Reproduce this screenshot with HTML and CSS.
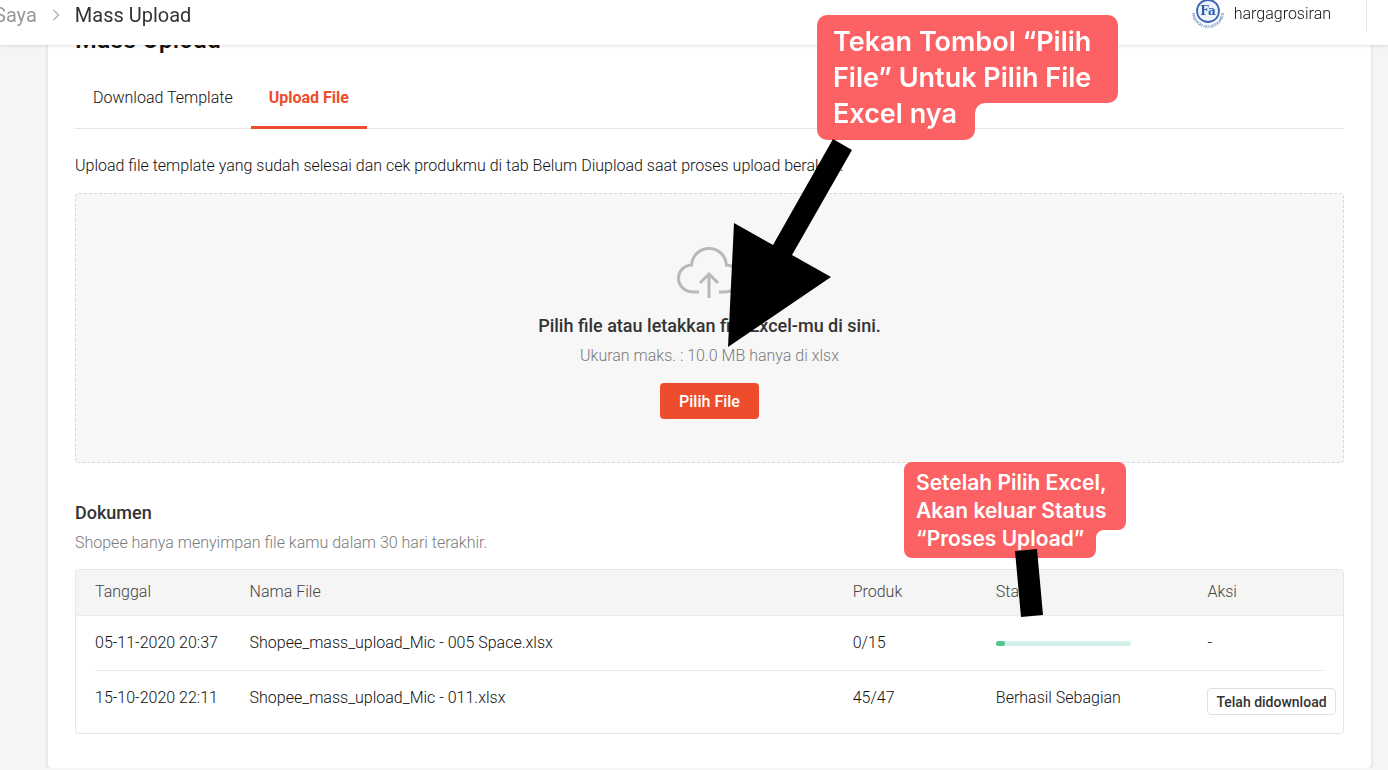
FILE: index.html
```html
<!DOCTYPE html>
<html lang="id">
<head>
    <meta charset="UTF-8">
    <meta name="viewport" content="width=device-width, initial-scale=1.0">
    <title>Mass Upload</title>
    <link rel="stylesheet" href="styles.css">
</head>
<body>
    <header class="topbar">
        <nav class="breadcrumb">
            <a href="#">Saya</a>
            <svg class="chevron" viewBox="0 0 8 12" width="8" height="12"><path d="M1.5 1l5 5-5 5" fill="none" stroke="#b2b2b2" stroke-width="1.4"/></svg>
            <span>Mass Upload</span>
        </nav>
        <div class="account">
            <svg class="avatar" viewBox="0 0 36 36" width="36" height="36">
                <defs><path id="ring" d="M2 18a16 16 0 0 0 32 0"/></defs>
                <circle cx="18" cy="17" r="11" fill="#edf3fb" stroke="#3f68b0" stroke-width="1.8"/>
                <text x="18" y="21" class="avatar-name">Fa</text>
                <text class="avatar-ring"><textPath href="#ring" startOffset="50%">FASHION ACCESSORIES</textPath></text>
            </svg>
            <span>hargagrosiran</span>
        </div>
    </header>

    <main class="card">
        <h1>Mass Upload</h1>
        <nav class="tabs">
            <a href="#">Download Template</a>
            <a href="#" class="active">Upload File</a>
        </nav>

        <p class="intro">Upload file template yang sudah selesai dan cek produkmu di tab Belum Diupload saat proses upload berakhir.</p>

        <section class="dropzone">
            <svg viewBox="0 0 66 52" width="66" height="52" fill="none" stroke="#b8b8b8" stroke-width="3">
                <path d="M22 46h-5C8 46 1.500 40 1.500 32.500 1.500 25 7 19.500 14.500 19 15.500 9.500 22.500 2.500 32 2.500S48.500 9.500 49.500 19C57 19.500 62.500 25 62.500 32.500 62.500 40 56 46 47 46H42"/>
                <path d="M32 52V28M23 37l9-9 9 9"/>
            </svg>
            <h2>Pilih file atau letakkan file Excel-mu di sini.</h2>
            <p class="muted">Ukuran maks. : 10.0 MB hanya di xlsx</p>
            <button type="button" class="btn-primary">Pilih File</button>
        </section>

        <section class="documents">
            <h2>Dokumen</h2>
            <p class="muted">Shopee hanya menyimpan file kamu dalam 30 hari terakhir.</p>
            <div class="table-box">
                <table>
                    <thead>
                        <tr>
                            <th class="col-date">Tanggal</th>
                            <th class="col-name">Nama File</th>
                            <th class="col-product">Produk</th>
                            <th class="col-status">Status</th>
                            <th>Aksi</th>
                        </tr>
                    </thead>
                    <tbody>
                        <tr>
                            <td>05-11-2020 20:37</td>
                            <td>Shopee_mass_upload_Mic - 005 Space.xlsx</td>
                            <td>0/15</td>
                            <td><div class="progress"><div class="progress-bar" style="width: 7%"></div></div></td>
                            <td>-</td>
                        </tr>
                        <tr>
                            <td>15-10-2020 22:11</td>
                            <td>Shopee_mass_upload_Mic - 011.xlsx</td>
                            <td>45/47</td>
                            <td>Berhasil Sebagian</td>
                            <td><button type="button" class="btn-small">Telah didownload</button></td>
                        </tr>
                    </tbody>
                </table>
            </div>
        </section>
    </main>

    <!-- Tutorial notes -->
    <div class="note note-pick">
        <svg viewBox="0 0 301 125" width="301" height="125"><path d="M10 0H291a10 10 0 0 1 10 10V78a10 10 0 0 1-10 10H168a10 10 0 0 0-10 10V115a10 10 0 0 1-10 10H10a10 10 0 0 1-10-10V10A10 10 0 0 1 10 0z" fill="#fc6163"/></svg>
        <p>Tekan Tombol “Pilih<br>File” Untuk Pilih File<br>Excel nya</p>
    </div>
    <div class="note note-status">
        <svg viewBox="0 0 222 96" width="222" height="96"><path d="M8 0H214a8 8 0 0 1 8 8V60a8 8 0 0 1-8 8H200a8 8 0 0 0-8 8V88a8 8 0 0 1-8 8H8a8 8 0 0 1-8-8V8A8 8 0 0 1 8 0z" fill="#fc6163"/></svg>
        <p>Setelah Pilih Excel,<br>Akan keluar Status<br>“Proses Upload”</p>
    </div>
    <svg class="arrow arrow-pick" viewBox="0 0 125 208" width="125" height="208"><path d="M105 0l19 11-60 105 39 22L0 208 6 84l39 22z"/></svg>
    <svg class="arrow arrow-status" viewBox="0 0 28 68" width="28" height="68"><path d="M0 2l22-2 6 66-22 2z"/></svg>
</body>
</html>
```
FILE: styles.css
```css
* {
    margin: 0;
    padding: 0;
    box-sizing: border-box;
}

body {
    position: relative;
    background: #f5f5f5;
    color: #111;
    font-family: Roboto, sans-serif;
    font-size: 16px;
    font-weight: 300;
    line-height: 20px;
}

a {
    color: inherit;
    text-decoration: none;
}

button {
    font-family: inherit;
    border-radius: 4px;
}

.muted {
    color: #7a7a7a;
}

/* Top bar */
.topbar {
    position: fixed;
    top: 0;
    left: 0;
    right: 0;
    z-index: 1;
    display: flex;
    justify-content: space-between;
    height: 45px;
    background: #fff;
    box-shadow: 0 1px 3px rgba(0, 0, 0, 0.12);
}

.breadcrumb {
    display: flex;
    align-items: center;
    gap: 15px;
    height: 30px;
    margin-left: -6px;
    color: #333;
    font-size: 20px;
    font-weight: 400;
}

.breadcrumb a {
    color: #999;
}

.account {
    display: flex;
    align-items: center;
    gap: 8px;
    height: 32px;
    margin-right: 21px;
    padding-right: 35px;
    border-right: 1px solid #e5e5e5;
}

.account span {
    padding-bottom: 4px;
}

.avatar {
    margin-top: -8px;
}

.avatar-name {
    fill: #2f5dab;
    font: bold 12px "DejaVu Serif", serif;
    text-anchor: middle;
}

.avatar-ring {
    fill: #6a8dc6;
    font: bold 4px "Liberation Sans", sans-serif;
    text-anchor: middle;
}

/* Content */
.card {
    margin: 0 17px 0 48px;
    padding: 26px 27px 34px;
    background: #fff;
    border-radius: 0 0 4px 4px;
    box-shadow: 0 1px 4px rgba(0, 0, 0, 0.14);
}

h1 {
    font-size: 25px;
    font-weight: 500;
    line-height: 28px;
}

h2 {
    color: #333;
    font-size: 18px;
    font-weight: 500;
    line-height: 24px;
}

.tabs {
    display: flex;
    margin-top: 14px;
    border-bottom: 1px solid #e5e5e5;
}

.tabs a {
    margin-bottom: -1px;
    padding: 20px 18px 18px;
    border-bottom: 3px solid transparent;
}

.tabs .active {
    border-color: #ee4d2d;
    color: #ee4d2d;
    font-weight: 700;
}

.intro {
    margin: 27px 0 17px;
}

.dropzone {
    display: flex;
    flex-direction: column;
    align-items: center;
    padding: 52px 0 43px;
    background: #f7f7f7;
    border: 1px dashed #d8d8d8;
    border-radius: 4px;
}

.dropzone h2 {
    margin: 16px 0 8px;
}

.btn-primary {
    height: 36px;
    margin-top: 17px;
    padding: 0 19px;
    background: #ee4d2d;
    border: 0;
    color: #fff;
    font-size: 16px;
    font-weight: 500;
}

.documents {
    margin-top: 38px;
}

.documents .muted {
    margin: 8px 0 16px;
}

/* Table */
.table-box {
    border: 1px solid #e5e5e5;
    border-radius: 4px;
    overflow: hidden;
}

table {
    width: 100%;
    border-collapse: collapse;
    table-layout: fixed;
}

th {
    padding: 12px 0 13px;
    background: #f5f5f5;
    border-bottom: 1px solid #ebebeb;
    color: #444;
    font-weight: 300;
    text-align: left;
}

td {
    padding: 17px 0 18px;
    vertical-align: top;
    white-space: nowrap;
}

th:first-child,
td:first-child {
    padding-left: 19px;
}

tbody tr:first-child {
    background: linear-gradient(#e8e8e8, #e8e8e8) center bottom / calc(100% - 38px) 1px no-repeat;
}

.col-date {
    width: 13.7%;
}

.col-name {
    width: 47.6%;
}

.col-product {
    width: 11.3%;
}

.col-status {
    width: 16.7%;
}

.progress {
    width: 135px;
    height: 5px;
    margin-top: 8px;
    background: #d2f0e9;
    border-radius: 3px;
}

.progress-bar {
    height: 100%;
    background: #55c38a;
    border-radius: 3px;
}

.btn-small {
    display: block;
    height: 27px;
    padding: 0 8px;
    background: #fff;
    border: 1px solid #e0e0e0;
    color: #333;
    font-size: 14px;
    font-weight: 500;
}

/* Notes over the page */
.note {
    position: absolute;
    z-index: 2;
    color: #fff;
    font-family: Inter, sans-serif;
    font-weight: 600;
    white-space: nowrap;
}

.note svg {
    position: absolute;
    top: 0;
    left: 0;
}

.note p {
    position: relative;
}

.note-pick {
    top: 15px;
    left: 817px;
    padding: 9px 16px;
    font-size: 27px;
    line-height: 36px;
}

.note-status {
    top: 462px;
    left: 904px;
    padding: 7px 12px;
    font-size: 21px;
    line-height: 28px;
}

.arrow {
    position: absolute;
    z-index: 3;
}

.arrow-pick {
    top: 139px;
    left: 728px;
}

.arrow-status {
    top: 549px;
    left: 1015px;
}
```
